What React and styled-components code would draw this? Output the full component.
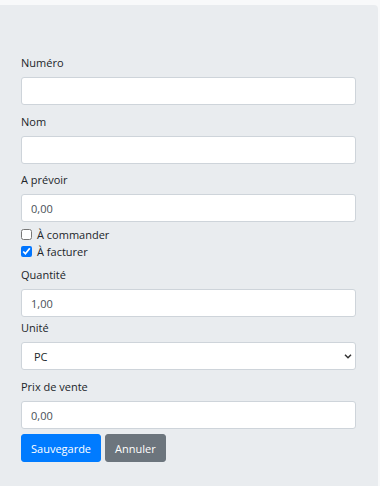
import React from "react";
import styled, { createGlobalStyle } from "styled-components";

const Global = createGlobalStyle`
  html, body { margin: 0; padding: 0; background: #f8f9fa; }
  body { font-family: "Open Sans", "Noto Sans", sans-serif; font-size: 11px; color: #212529; }
  * { box-sizing: border-box; }
`;

const Panel = styled.div`
  margin: 5px 2px 0 0;
  min-height: calc(100vh - 5px);
  background: #e9ecef;
  border-top-right-radius: 4px;
  padding: 49px 22px 20px 21px;
`;

const Group = styled.div`
  display: flex;
  flex-direction: column;
  margin-bottom: ${(p) => p.$mb}px;
`;

const Label = styled.label`
  display: block;
  font-size: 11px;
  line-height: 18px;
  margin-bottom: 5px;
  color: #212529;
`;

const Input = styled.input`
  display: block;
  width: 100%;
  height: 28px;
  padding: 0 9px;
  font-family: inherit;
  font-size: 11px;
  color: #495057;
  background: #fff;
  border: 1px solid #ced4da;
  border-radius: 3px;
  outline: none;
`;

const SelectWrap = styled.div`
  position: relative;
`;

const Select = styled.select`
  display: block;
  width: 100%;
  height: 28px;
  padding: 0 20px 0 12px;
  font-family: inherit;
  font-size: 11px;
  color: #212529;
  background: #fff;
  border: 1px solid #ced4da;
  border-radius: 3px;
  appearance: none;
  outline: none;
`;

const Chevron = styled.svg`
  position: absolute;
  right: 4px;
  top: 12px;
  pointer-events: none;
`;

const Checks = styled.div`
  display: flex;
  flex-direction: column;
  margin-bottom: 6px;
`;

const CheckRow = styled.label`
  display: flex;
  align-items: center;
  height: 17px;
  font-size: 11px;
  color: #212529;
`;

const Box = styled.input`
  width: 11px;
  height: 11px;
  margin: 0 5px 0 0;
`;

const Actions = styled.div`
  display: flex;
  gap: 4px;
`;

const Button = styled.button`
  height: 28px;
  padding: 0 9px;
  font-family: inherit;
  font-size: 11px;
  color: #fff;
  background: ${(p) => (p.$variant === "primary" ? "#007bff" : "#6c757d")};
  border: 1px solid ${(p) => (p.$variant === "primary" ? "#007bff" : "#6c757d")};
  border-radius: 3px;
`;

function Field({ label, value, mb }) {
  return (
    <Group $mb={mb}>
      <Label>{label}</Label>
      <Input defaultValue={value} />
    </Group>
  );
}

export default function App() {
  return (
    <>
      <Global />
      <Panel>
        <Field label="Numéro" value="" mb={8} />
        <Field label="Nom" value="" mb={7} />
        <Field label="A prévoir" value="0,00" mb={4} />
        <Checks>
          <CheckRow>
            <Box type="checkbox" />À commander
          </CheckRow>
          <CheckRow>
            <Box type="checkbox" defaultChecked />À facturer
          </CheckRow>
        </Checks>
        <Field label="Quantité" value="1,00" mb={2} />
        <Group $mb={8}>
          <Label>Unité</Label>
          <SelectWrap>
            <Select defaultValue="PC">
              <option value="PC">PC</option>
            </Select>
            <Chevron width="8" height="5" viewBox="0 0 8 5">
              <polyline points="1,0.8 4,3.8 7,0.8" fill="none" stroke="#333" strokeWidth="1.5" />
            </Chevron>
          </SelectWrap>
        </Group>
        <Field label="Prix de vente" value="0,00" mb={5} />
        <Actions>
          <Button $variant="primary">Sauvegarde</Button>
          <Button $variant="secondary">Annuler</Button>
        </Actions>
      </Panel>
    </>
  );
}
